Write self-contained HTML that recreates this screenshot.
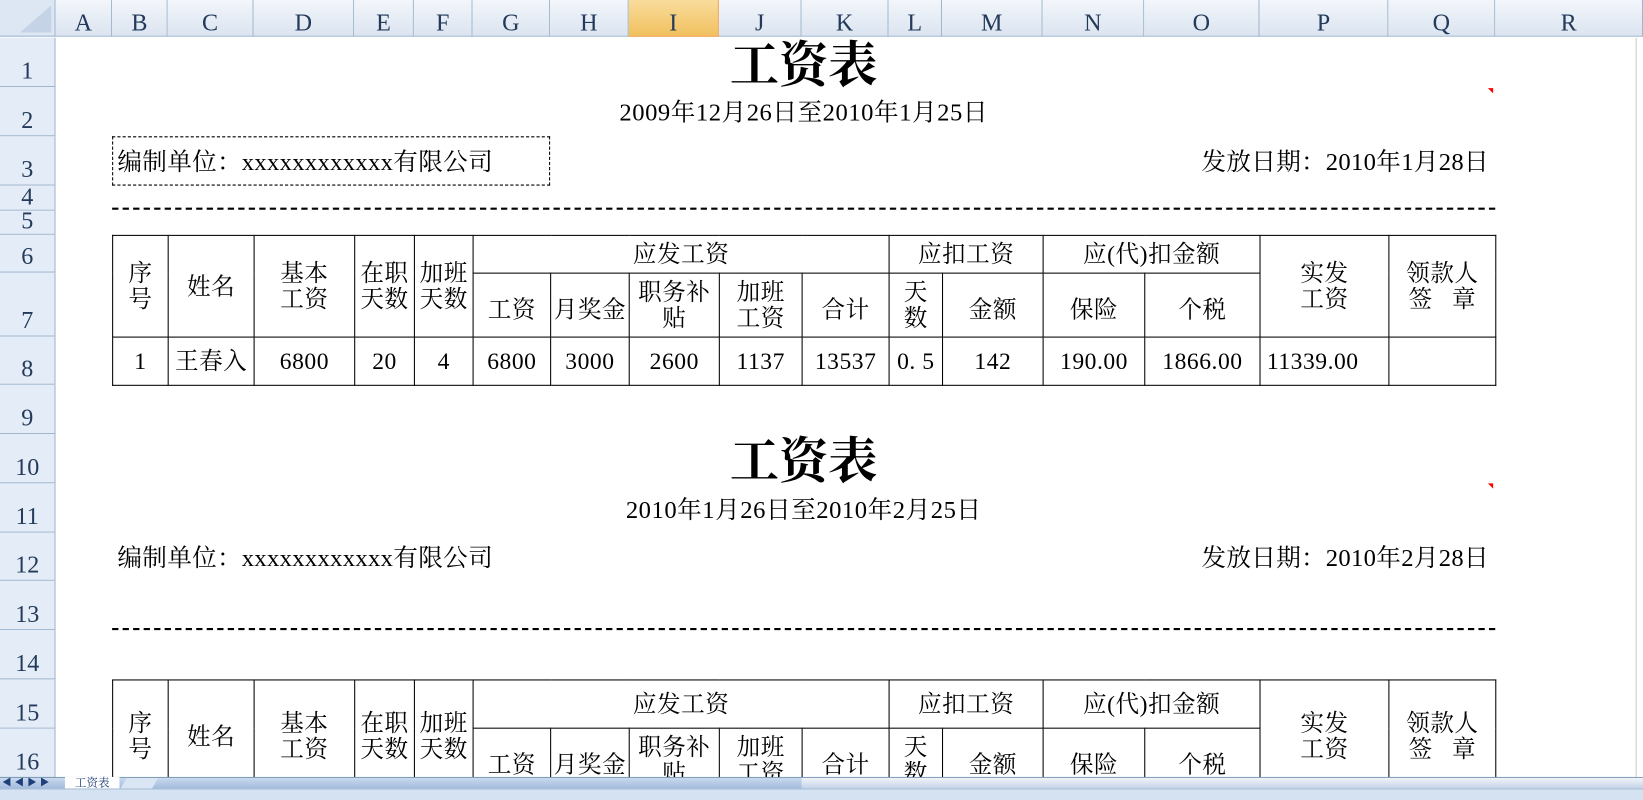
<!DOCTYPE html>
<html><head><meta charset="utf-8">
<style>
html,body{margin:0;padding:0;width:1643px;height:800px;overflow:hidden;background:#fff}
#w{position:absolute;left:0;top:0;width:1568px;height:763px;transform:scale(1.04783,1.04849);transform-origin:0 0;overflow:hidden;font-family:"Liberation Serif","Noto Serif CJK SC",serif;color:#000}
.ab{position:absolute}
.ch{position:absolute;top:0;height:35px;border-right:1px solid #9eb6ce;border-bottom:1px solid #9eb6ce;background:linear-gradient(#f3f6fb,#dbe4f0);font-size:23px;color:#233a5a;text-align:center;line-height:44px;box-sizing:border-box}
.rh{position:absolute;left:0;width:53px;border-bottom:1px solid #9eb6ce;border-right:1px solid #9eb6ce;background:#e4ecf7;font-size:23px;color:#233a5a;text-align:center;box-sizing:border-box;display:flex;align-items:flex-end;justify-content:center;padding-bottom:2px;line-height:24px}
table{position:absolute;border-collapse:collapse;table-layout:fixed;font-size:22.5px;letter-spacing:0.5px}
td{border:1.3px solid #000;text-align:center;padding:0;line-height:25px;overflow:hidden;white-space:nowrap}
.t{font-size:23.5px;letter-spacing:0.5px;text-align:center;position:absolute;left:107px;width:1320px}
.title{font-size:47px;font-weight:bold;text-align:center;position:absolute;left:107px;width:1320px}
.dash{position:absolute;left:107px;width:1320px;border-top:2px dashed #000}
.red{position:absolute;width:0;height:0;border-top:5px solid #f00;border-left:5px solid transparent}
.lbl{position:absolute;font-size:23.5px;letter-spacing:0.3px;line-height:26px;white-space:nowrap}
.c{display:inline-block;width:1em;text-align:left}
</style></head><body><div id="w">
<div class="ch" style="left:0;width:53px;background:#dde7f4"><div class="ab" style="right:3px;bottom:3px;width:0;height:0;border-left:30px solid transparent;border-bottom:26px solid #c5d3e6"></div></div>
<div class="ch" style="left:53px;width:54px">A</div>
<div class="ch" style="left:107px;width:53px">B</div>
<div class="ch" style="left:160px;width:82px">C</div>
<div class="ch" style="left:242px;width:96px">D</div>
<div class="ch" style="left:338px;width:57px">E</div>
<div class="ch" style="left:395px;width:56px">F</div>
<div class="ch" style="left:451px;width:74px">G</div>
<div class="ch" style="left:525px;width:75px">H</div>
<div class="ch" style="left:600px;width:86px;background:linear-gradient(#f9dc9c,#f1c15f);border-color:#f29436">I</div>
<div class="ch" style="left:686px;width:79px">J</div>
<div class="ch" style="left:765px;width:83px">K</div>
<div class="ch" style="left:848px;width:51px">L</div>
<div class="ch" style="left:899px;width:96px">M</div>
<div class="ch" style="left:995px;width:97px">N</div>
<div class="ch" style="left:1092px;width:110px">O</div>
<div class="ch" style="left:1202px;width:123px">P</div>
<div class="ch" style="left:1325px;width:102px">Q</div>
<div class="ch" style="left:1427px;width:141px">R</div>
<div class="rh" style="top:36px;height:47px">1</div>
<div class="rh" style="top:83px;height:47px">2</div>
<div class="rh" style="top:130px;height:47px">3</div>
<div class="rh" style="top:177px;height:24px;padding-bottom:0">4</div>
<div class="rh" style="top:201px;height:23px;padding-bottom:0">5</div>
<div class="rh" style="top:224px;height:36px">6</div>
<div class="rh" style="top:260px;height:61px">7</div>
<div class="rh" style="top:321px;height:46px">8</div>
<div class="rh" style="top:367px;height:47px">9</div>
<div class="rh" style="top:414px;height:47px">10</div>
<div class="rh" style="top:461px;height:47px">11</div>
<div class="rh" style="top:508px;height:46px">12</div>
<div class="rh" style="top:554px;height:47px">13</div>
<div class="rh" style="top:601px;height:47px">14</div>
<div class="rh" style="top:648px;height:47px">15</div>
<div class="rh" style="top:695px;height:47px">16</div>
<div class="ab" style="left:1561px;top:36px;width:7px;height:705px;background:#fff;border-left:1px solid #ccc"></div>

<div class="title" style="top:37px;line-height:52px">工资表</div>
<div class="t" style="top:95px;line-height:26px">2009年12月26日至2010年1月25日</div>
<div class="ab" style="left:107px;top:130px;width:416px;height:45px;border:1.5px dashed #000"></div>
<div class="lbl" style="left:112px;top:142px">编制单位<span class="c">：</span>xxxxxxxxxxxx有限公司</div>
<div class="lbl" style="right:147px;top:142px">发放日期<span class="c">：</span>2010年1月28日</div>
<div class="red" style="left:1420px;top:84px"></div>
<div class="dash" style="top:198px"></div>

<table style="left:107px;top:224px;width:1321px">
<colgroup><col style="width:53px"><col style="width:82px"><col style="width:96px"><col style="width:57px"><col style="width:56px"><col style="width:74px"><col style="width:75px"><col style="width:86px"><col style="width:79px"><col style="width:83px"><col style="width:51px"><col style="width:96px"><col style="width:97px"><col style="width:110px"><col style="width:123px"><col style="width:102px"></colgroup>
<tr style="height:36px"><td rowspan="2">序<br>号</td><td rowspan="2">姓名</td><td rowspan="2">基本<br>工资</td><td rowspan="2">在职<br>天数</td><td rowspan="2">加班<br>天数</td><td colspan="5">应发工资</td><td colspan="2">应扣工资</td><td colspan="2">应(代)扣金额</td><td rowspan="2">实发<br>工资</td><td rowspan="2">领款人<br>签&nbsp;&nbsp;&nbsp;章</td></tr>
<tr style="height:61px"><td style="padding-top:8px">工资</td><td style="padding-top:8px">月奖金</td><td>职务补<br>贴</td><td>加班<br>工资</td><td style="padding-top:8px">合计</td><td>天<br>数</td><td style="padding-top:8px">金额</td><td style="padding-top:8px">保险</td><td style="padding-top:8px">个税</td></tr>
<tr style="height:46px"><td>1</td><td>王春入</td><td>6800</td><td>20</td><td>4</td><td>6800</td><td>3000</td><td>2600</td><td>1137</td><td>13537</td><td>0. 5</td><td>142</td><td>190.00</td><td>1866.00</td><td style="text-align:left;padding-left:6px">11339.00</td><td></td></tr>
</table>

<div class="title" style="top:415px;line-height:52px">工资表</div>
<div class="t" style="top:474px;line-height:26px">2010年1月26日至2010年2月25日</div>
<div class="lbl" style="left:112px;top:520px">编制单位<span class="c">：</span>xxxxxxxxxxxx有限公司</div>
<div class="lbl" style="right:147px;top:520px">发放日期<span class="c">：</span>2010年2月28日</div>
<div class="red" style="left:1420px;top:461px"></div>
<div class="dash" style="top:599px"></div>

<table style="left:107px;top:648px;width:1321px">
<colgroup><col style="width:53px"><col style="width:82px"><col style="width:96px"><col style="width:57px"><col style="width:56px"><col style="width:74px"><col style="width:75px"><col style="width:86px"><col style="width:79px"><col style="width:83px"><col style="width:51px"><col style="width:96px"><col style="width:97px"><col style="width:110px"><col style="width:123px"><col style="width:102px"></colgroup>
<tr style="height:46px"><td rowspan="2">序<br>号</td><td rowspan="2">姓名</td><td rowspan="2">基本<br>工资</td><td rowspan="2">在职<br>天数</td><td rowspan="2">加班<br>天数</td><td colspan="5">应发工资</td><td colspan="2">应扣工资</td><td colspan="2">应(代)扣金额</td><td rowspan="2">实发<br>工资</td><td rowspan="2">领款人<br>签&nbsp;&nbsp;&nbsp;章</td></tr>
<tr style="height:61px"><td style="padding-top:8px">工资</td><td style="padding-top:8px">月奖金</td><td>职务补<br>贴</td><td>加班<br>工资</td><td style="padding-top:8px">合计</td><td>天<br>数</td><td style="padding-top:8px">金额</td><td style="padding-top:8px">保险</td><td style="padding-top:8px">个税</td></tr>
</table>

<div class="ab" style="left:0;top:741px;width:1568px;height:11px;background:linear-gradient(#c9d9ee,#9fb8db);border-top:1px solid #7f9db9"></div>
<div class="ab" style="left:2px;top:741px;width:56px;height:11px;font-size:9px;color:#1f3f7a;line-height:11px;letter-spacing:3px">◀◀▶▶</div>
<div class="ab" style="left:62px;top:741px;width:52px;height:11px;background:#fff;font-size:11px;line-height:12px;text-align:center;color:#1b3a78">工资表</div>
<div class="ab" style="left:118px;top:742px;width:30px;height:10px;background:#dbe6f4;transform:skewX(-30deg)"></div>
<div class="ab" style="left:765px;top:742px;width:803px;height:10px;background:linear-gradient(#f0f4fa,#c4d2e6)"></div>
<div class="ab" style="left:0;top:752px;width:1568px;height:11px;background:#d5e2f2;border-top:1px solid #a9bfd6"></div>
</div></body></html>
